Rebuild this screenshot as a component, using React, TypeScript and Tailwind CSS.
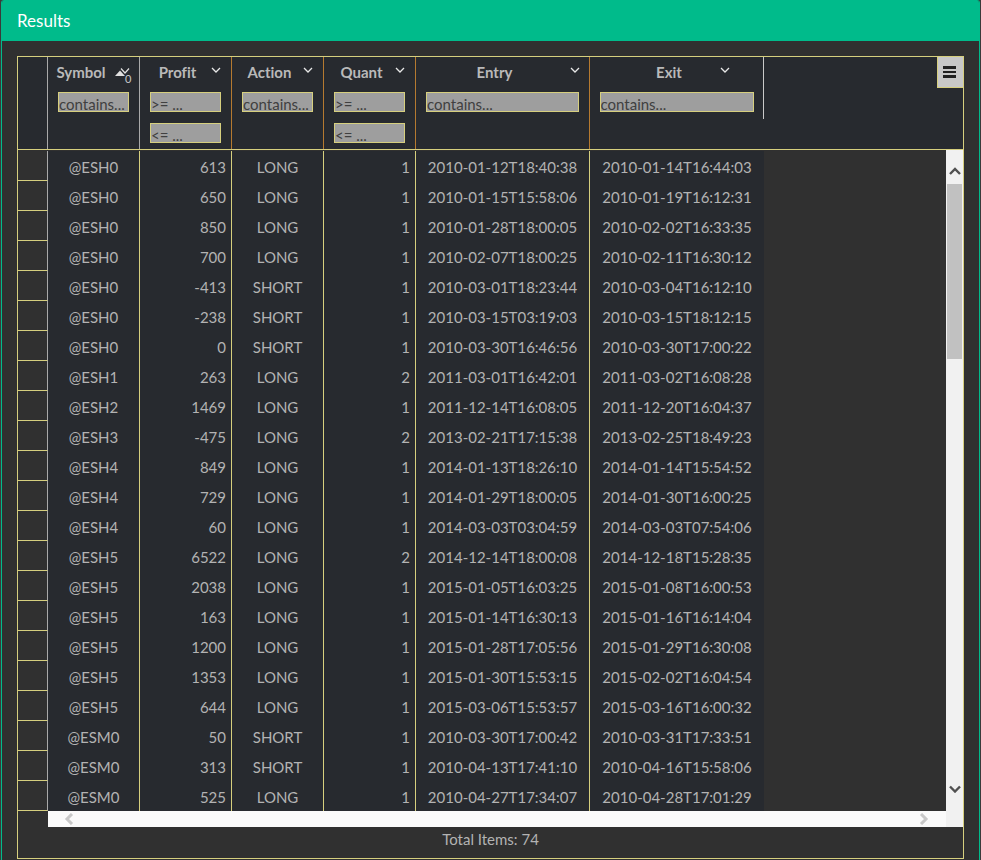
const rows: [string, string, string, string, string, string][] = [
  ["@ESH0", "613", "LONG", "1", "2010-01-12T18:40:38", "2010-01-14T16:44:03"],
  ["@ESH0", "650", "LONG", "1", "2010-01-15T15:58:06", "2010-01-19T16:12:31"],
  ["@ESH0", "850", "LONG", "1", "2010-01-28T18:00:05", "2010-02-02T16:33:35"],
  ["@ESH0", "700", "LONG", "1", "2010-02-07T18:00:25", "2010-02-11T16:30:12"],
  ["@ESH0", "-413", "SHORT", "1", "2010-03-01T18:23:44", "2010-03-04T16:12:10"],
  ["@ESH0", "-238", "SHORT", "1", "2010-03-15T03:19:03", "2010-03-15T18:12:15"],
  ["@ESH0", "0", "SHORT", "1", "2010-03-30T16:46:56", "2010-03-30T17:00:22"],
  ["@ESH1", "263", "LONG", "2", "2011-03-01T16:42:01", "2011-03-02T16:08:28"],
  ["@ESH2", "1469", "LONG", "1", "2011-12-14T16:08:05", "2011-12-20T16:04:37"],
  ["@ESH3", "-475", "LONG", "2", "2013-02-21T17:15:38", "2013-02-25T18:49:23"],
  ["@ESH4", "849", "LONG", "1", "2014-01-13T18:26:10", "2014-01-14T15:54:52"],
  ["@ESH4", "729", "LONG", "1", "2014-01-29T18:00:05", "2014-01-30T16:00:25"],
  ["@ESH4", "60", "LONG", "1", "2014-03-03T03:04:59", "2014-03-03T07:54:06"],
  ["@ESH5", "6522", "LONG", "2", "2014-12-14T18:00:08", "2014-12-18T15:28:35"],
  ["@ESH5", "2038", "LONG", "1", "2015-01-05T16:03:25", "2015-01-08T16:00:53"],
  ["@ESH5", "163", "LONG", "1", "2015-01-14T16:30:13", "2015-01-16T16:14:04"],
  ["@ESH5", "1200", "LONG", "1", "2015-01-28T17:05:56", "2015-01-29T16:30:08"],
  ["@ESH5", "1353", "LONG", "1", "2015-01-30T15:53:15", "2015-02-02T16:04:54"],
  ["@ESH5", "644", "LONG", "1", "2015-03-06T15:53:57", "2015-03-16T16:00:32"],
  ["@ESM0", "50", "SHORT", "1", "2010-03-30T17:00:42", "2010-03-31T17:33:51"],
  ["@ESM0", "313", "SHORT", "1", "2010-04-13T17:41:10", "2010-04-16T15:58:06"],
  ["@ESM0", "525", "LONG", "1", "2010-04-27T17:34:07", "2010-04-28T17:01:29"],
];

function Chevron({ className }: { className?: string }) {
  return (
    <svg width="10" height="6" viewBox="0 0 10 6" className={className}>
      <path d="M1 1l4 4 4-4" fill="none" stroke="#e8e8e8" strokeWidth="1.300" />
    </svg>
  );
}

function SortIcon() {
  return (
    <span className="absolute left-[67px] top-[9px] h-[16px] w-[18px]">
      <svg width="18" height="16" viewBox="0 0 18 16">
        <path d="M0 10l5-5.500 5 5.500z" fill="#e0e0e0" />
        <path d="M6 2.500l4 4.500 4-4.500" fill="none" stroke="#e0e0e0" strokeWidth="1.200" />
      </svg>
      <span className="absolute left-[10px] top-[6px] text-[11px] leading-[13px] text-[#c8c8c8]">0</span>
    </span>
  );
}

function FilterBox({ text, className }: { text: string; className: string }) {
  return (
    <div className={`h-[20px] overflow-hidden border border-[#d6cf7e] bg-[#9e9e9e] text-[15px] leading-[22px] text-[#404040] ${className}`}>
      {text}
    </div>
  );
}

function HeaderCell({
  title,
  width,
  range,
  chevronLeft,
  sorted,
  inputClass,
}: {
  title: string;
  width: string;
  range?: boolean;
  chevronLeft: string;
  sorted?: boolean;
  inputClass: string;
}) {
  return (
    <div className={`relative flex h-full flex-col items-center border-r ${width} ${sorted ? "border-[#a9a9a9]" : "border-[#b57a30]"}`}>
      <div className={`h-[35px] w-full pt-[5px] text-center text-[15px] font-bold leading-[20px] text-[#b9b9b9] [font-variant-ligatures:none] ${sorted ? "pr-[25px]" : "pr-[16px]"}`}>
        {title}
      </div>
      {sorted ? <SortIcon /> : <Chevron className={`absolute top-[10px] ${chevronLeft}`} />}
      {range ? (
        <div className="flex flex-col gap-[11px]">
          <FilterBox text=">= ..." className={inputClass} />
          <FilterBox text="<= ..." className={inputClass} />
        </div>
      ) : (
        <FilterBox text="contains..." className={inputClass} />
      )}
    </div>
  );
}

export default function App() {
  return (
    <div className="h-[860px] w-[981px] overflow-hidden bg-[#3a3a3a] px-px">
      <div
        className="flex h-[860px] w-[979px] flex-col overflow-hidden rounded-t-[3px] border-x border-[#00bb8b] bg-[#303030] text-[15px] text-[#b3b3b3]"
        style={{ fontFamily: "Lato, 'Open Sans', sans-serif" }}
      >
        <div className="h-[41px] shrink-0 bg-[#00bb8b] pl-[15px] pt-[10px] text-[17px] leading-[21px] text-white">Results</div>

        <div className="ml-[15px] mt-[15px] flex h-[803px] w-[947px] flex-col border border-[#d6cf7e]">
          {/* header */}
          <div className="relative flex h-[93px] shrink-0 border-b border-[#d6cf7e] bg-[#272a2f]">
            <div className="w-[30px] shrink-0 border-r border-[#a9a9a9]" />
            <HeaderCell title="Symbol" width="w-[92px]" chevronLeft="" sorted inputClass="w-[71px]" />
            <HeaderCell title="Profit" width="w-[92px]" chevronLeft="left-[71px]" range inputClass="w-[71px]" />
            <HeaderCell title="Action" width="w-[92px]" chevronLeft="left-[71px]" inputClass="w-[71px]" />
            <HeaderCell title="Quant" width="w-[92px]" chevronLeft="left-[71px]" range inputClass="w-[71px]" />
            <HeaderCell title="Entry" width="w-[174px]" chevronLeft="left-[154px]" inputClass="w-[153px]" />
            <div className="relative flex h-[62px] w-[174px] flex-col items-center border-r border-[#c9c9c9]">
              <div className="h-[35px] w-full pr-[15px] pt-[5px] text-center text-[15px] font-bold leading-[20px] text-[#b9b9b9]">Exit</div>
              <Chevron className="absolute left-[130px] top-[10px]" />
              <FilterBox text="contains..." className="w-[154px]" />
            </div>
            <div className="absolute right-0 top-0 flex h-[31px] w-[26px] flex-col items-center justify-center gap-[2px] border-b border-l border-[#d6cf7e] bg-[#c8c8c8] pr-[3px]">
              <span className="h-[2.500px] w-[13px] bg-[#222222]" />
              <span className="h-[2.500px] w-[13px] bg-[#222222]" />
              <span className="h-[2.500px] w-[13px] bg-[#222222]" />
            </div>
          </div>

          {/* body */}
          <div className="flex h-[677px] shrink-0">
            <div className="h-[661px] w-[30px] shrink-0 pt-px">
              {rows.map((_, i) => (
                <div key={i} className="h-[30px] border-b border-r border-b-[#d6cf7e] border-r-[#a9a9a9]" />
              ))}
            </div>
            <div className="flex w-[898px] shrink-0 flex-col">
              <div className="h-[661px] overflow-hidden pt-px">
                {rows.map((r, i) => (
                  <div key={i} className="flex h-[30px] w-[716px] bg-[#272a2f] leading-[33px]">
                    <div className="w-[92px] border-r border-[#d6cf7e] text-center">{r[0]}</div>
                    <div className="w-[92px] border-r border-[#d6cf7e] pr-[5px] text-right">{r[1]}</div>
                    <div className="w-[92px] border-r border-[#d6cf7e] text-center">{r[2]}</div>
                    <div className="w-[92px] border-r border-[#d6cf7e] pr-[5px] text-right">{r[3]}</div>
                    <div className="w-[174px] border-r border-[#d6cf7e] text-center">{r[4]}</div>
                    <div className="w-[174px] text-center">{r[5]}</div>
                  </div>
                ))}
              </div>
              <div className="flex h-[16px] items-center justify-between bg-[#fafafa] px-[16px]">
                <svg width="10" height="12" viewBox="0 0 10 12">
                  <path d="M8 1L3 6l5 5" fill="none" stroke="#c8c8c8" strokeWidth="3" />
                </svg>
                <svg width="10" height="12" viewBox="0 0 10 12" className="mr-[1px]">
                  <path d="M2 1l5 5-5 5" fill="none" stroke="#c8c8c8" strokeWidth="3" />
                </svg>
              </div>
            </div>
            <div className="flex w-[17px] shrink-0 flex-col items-center bg-[#f1f1f1]">
              <svg width="12" height="9" viewBox="0 0 12 9" className="mt-[17px]">
                <path d="M1 7l5-5 5 5" fill="none" stroke="#505050" strokeWidth="2.400" />
              </svg>
              <div className="mt-[8px] h-[175px] w-[15px] bg-[#c1c1c1]" />
              <div className="flex-1" />
              <svg width="12" height="8" viewBox="0 0 12 8" className="mb-[34px]">
                <path d="M1 1.500l5 5 5-5" fill="none" stroke="#505050" strokeWidth="2.400" />
              </svg>
            </div>
          </div>

          <div className="flex flex-1 items-center justify-center pb-[6px] text-[15px]">Total Items: 74</div>
        </div>
      </div>
    </div>
  );
}
